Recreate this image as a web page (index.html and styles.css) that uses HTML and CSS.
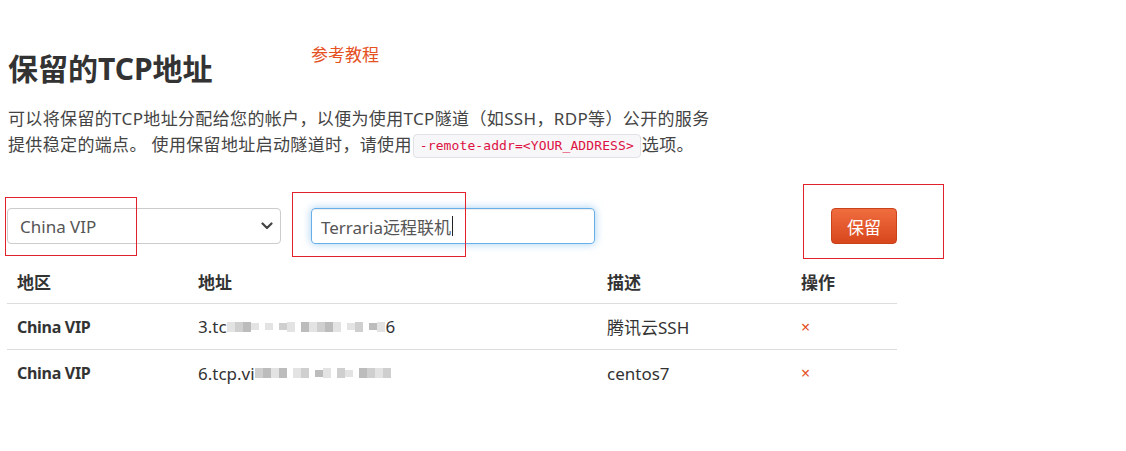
FILE: index.html
```html
<!DOCTYPE html>
<html lang="zh-CN">
<head>
<meta charset="utf-8">
<title>保留的TCP地址</title>
<link rel="stylesheet" href="styles.css">
</head>
<body>
<div class="page">
  <div class="head">
    <h1 class="title">保留的TCP地址</h1>
    <a class="guide" href="#">参考教程</a>
  </div>
  <p class="desc">可以将保留的TCP地址分配给您的帐户，以便为使用TCP隧道（如SSH，RDP等）公开的服务<br>提供稳定的端点。 使用保留地址启动隧道时，请使用<code class="code">-remote-addr=&lt;YOUR_ADDRESS&gt;</code>选项。</p>

  <div class="controls">
    <div class="select">
      <span>China VIP</span>
      <svg class="chev" width="12" height="8" viewBox="0 0 12 8"><path d="M1.5 1.5 L6 6 L10.5 1.5" fill="none" stroke="#444" stroke-width="2.2" stroke-linecap="round" stroke-linejoin="round"/></svg>
    </div>
    <div class="input"><span>Terraria远程联机</span><i class="caret"></i></div>
    <button class="btn">保留</button>
  </div>

  <div class="table">
    <div class="row header">
      <div class="cell c1">地区</div>
      <div class="cell c2">地址</div>
      <div class="cell c3">描述</div>
      <div class="cell c4">操作</div>
    </div>
    <div class="row">
      <div class="cell c1 strong">China VIP</div>
      <div class="cell c2">3.tc<span class="pix"><i class="p2"></i><i class="p1"></i><i class="p3"></i><i class="p2 s"></i><i class="gap"></i><i class="p2 s"></i><i class="gap"></i><i class="p1 s"></i><i class="p2"></i><i class="gap"></i><i class="p3"></i><i class="p2"></i><i class="p1"></i><i class="p3"></i><i class="p2"></i><i class="gap"></i><i class="p2 s"></i><i class="p1"></i><i class="gap"></i><i class="p3 s"></i><i class="p2"></i></span>6</div>
      <div class="cell c3">腾讯云SSH</div>
      <div class="cell c4"><span class="del">×</span></div>
    </div>
    <div class="row last">
      <div class="cell c1 strong">China VIP</div>
      <div class="cell c2">6.tcp.vi<span class="pix"><i class="p1"></i><i class="p3"></i><i class="p2"></i><i class="p3"></i><i class="gap"></i><i class="p2"></i><i class="p1"></i><i class="gap"></i><i class="p3 s"></i><i class="p2"></i><i class="gap"></i><i class="p1"></i><i class="p2 s"></i><i class="gap"></i><i class="p3"></i><i class="p1"></i><i class="p2"></i><i class="p1"></i></span></div>
      <div class="cell c3">centos7</div>
      <div class="cell c4"><span class="del">×</span></div>
    </div>
  </div>

  <div class="mark m1"></div>
  <div class="mark m2"></div>
  <div class="mark m3"></div>
</div>
</body>
</html>
```

FILE: styles.css
```css
* { box-sizing: border-box; }
html, body { margin: 0; padding: 0; background: #fff; }
body {
  font-family: "Noto Sans", "Noto Sans CJK SC", sans-serif;
  font-size: 17px;
  color: #333;
}
.page {
  position: relative;
  width: 1126px;
  height: 451px;
  padding: 44px 0 0 7px;
}
.head {
  display: grid;
  grid-template-columns: 304px auto;
  align-items: start;
  height: 58px;
}
.title {
  margin: 8px 0 0 1px;
  font-size: 30px;
  line-height: 34px;
  font-weight: 700;
  color: #333;
}
.guide {
  color: #e5501f;
  text-decoration: none;
  font-size: 17px;
  line-height: 22px;
}
.desc {
  margin: 4px 0 0 1px;
  font-size: 17px;
  line-height: 26px;
  color: #444;
  letter-spacing: 0.35px;
}
.code {
  display: inline-block;
  font-family: "DejaVu Sans Mono", monospace;
  font-size: 13px;
  line-height: 18px;
  color: #dd1144;
  background: #f7f7f9;
  border: 1px solid #e1e1e8;
  border-radius: 4px;
  padding: 2px 6px;
  margin: 0 1px;
  letter-spacing: 0.1px;
  vertical-align: 1px;
}
.controls {
  display: flex;
  align-items: center;
  margin-top: 50px;
  height: 36px;
}
.select {
  width: 274px;
  height: 36px;
  border: 1px solid #ccc;
  border-radius: 4px;
  display: flex;
  align-items: center;
  justify-content: space-between;
  padding: 0 7px 0 12px;
  color: #555;
}
.input {
  margin-left: 30px;
  width: 284px;
  height: 36px;
  border: 1px solid #66afe9;
  border-radius: 4px;
  box-shadow: inset 0 1px 1px rgba(0,0,0,.075), 0 0 8px rgba(102,175,233,.6);
  display: flex;
  align-items: center;
  padding: 0 9px;
  color: #555;
}
.caret {
  display: inline-block;
  width: 1px;
  height: 20px;
  background: #222;
  margin-left: 1px;
}
.btn {
  margin-left: 236px;
  width: 66px;
  height: 36px;
  border: 1px solid #c9421a;
  border-radius: 4px;
  background: linear-gradient(#ef6d3f, #d8461c);
  color: #fff;
  font-family: inherit;
  font-size: 17px;
  padding: 0;
}
.table {
  width: 890px;
  margin-top: 15px;
}
.row {
  display: grid;
  grid-template-columns: 181px 409px 197px 103px;
  height: 46px;
  align-items: center;
  border-bottom: 1px solid #ddd;
}
.row.last { border-bottom: none; }
.cell {
  padding-left: 10px;
  color: #333;
  white-space: nowrap;
  display: flex;
  align-items: center;
}
.c4 { padding-left: 7px; }
.header { height: 45px; }
.header .cell { font-weight: 700; }
.strong { font-weight: 700; font-size: 16px; letter-spacing: -0.3px; }
.pix {
  display: inline-flex;
  align-items: center;
  height: 14px;
  margin: 0 1px 0 0;
}
.pix i {
  display: inline-block;
  width: 8px;
  height: 10px;
}
.pix i.s { height: 7px; }
.pix .p1 { background: #cfcfcf; }
.pix .p2 { background: #e3e3e3; }
.pix .p3 { background: #bcbcbc; }
.pix .gap { width: 6px; background: transparent; }
.del {
  color: #e5501f;
  font-size: 16px;
}
.mark {
  position: absolute;
  border: 1px solid #e4212b;
}
.m1 { left: 5px; top: 197px; width: 132px; height: 59px; }
.m2 { left: 292px; top: 192px; width: 174px; height: 65px; }
.m3 { left: 803px; top: 184px; width: 141px; height: 75px; }
```
